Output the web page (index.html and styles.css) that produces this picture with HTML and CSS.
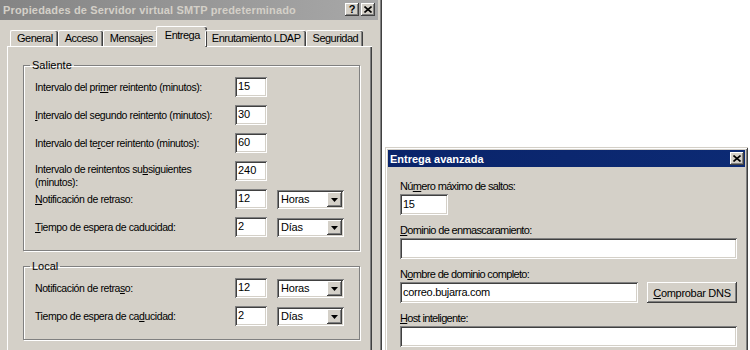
FILE: index.html
```html
<!DOCTYPE html>
<html lang="es">
<head>
<meta charset="utf-8">
<title>Propiedades de Servidor virtual SMTP predeterminado</title>
<link rel="stylesheet" href="styles.css">
</head>
<body>
<div class="screen">
  <div class="dlg-main">
    <div class="titlebar inactive">
      <span class="title">Propiedades de Servidor virtual SMTP predeterminado</span>
      <span class="tbtns">
        <span class="tbtn help">?</span>
        <span class="tbtn close"><svg width="8" height="7" viewBox="0 0 8 7"><path d="M0.5 0.5 L7.5 6.5 M7.5 0.5 L0.5 6.5" stroke="#000" stroke-width="1.6" fill="none"/></svg></span>
      </span>
    </div>
    <div class="tabs">
      <div class="tab">General</div>
      <div class="tab">Acceso</div>
      <div class="tab">Mensajes</div>
      <div class="tab active">Entrega</div>
      <div class="tab">Enrutamiento LDAP</div>
      <div class="tab">Seguridad</div>
    </div>
    <div class="panel">
      <fieldset class="group">
        <legend>Saliente</legend>
        <div class="row"><span class="lbl">Intervalo del pri<u>m</u>er reintento (minutos):</span><span class="edit num">15</span></div>
        <div class="row"><span class="lbl"><u>I</u>ntervalo del segundo reintento (minutos):</span><span class="edit num">30</span></div>
        <div class="row"><span class="lbl">Intervalo del te<u>r</u>cer reintento (minutos):</span><span class="edit num">60</span></div>
        <div class="row"><span class="lbl two">Intervalo de reintentos su<u>b</u>siguientes<br>(minutos):</span><span class="edit num">240</span></div>
        <div class="row"><span class="lbl"><u>N</u>otificación de retraso:</span><span class="edit num">12</span><span class="combo"><span class="combo-text">Horas</span><span class="drop"><svg width="7" height="4" viewBox="0 0 7 4"><path d="M0 0 H7 L3.5 4 Z" fill="#000"/></svg></span></span></div>
        <div class="row"><span class="lbl"><u>T</u>iempo de espera de caducidad:</span><span class="edit num">2</span><span class="combo"><span class="combo-text">Días</span><span class="drop"><svg width="7" height="4" viewBox="0 0 7 4"><path d="M0 0 H7 L3.5 4 Z" fill="#000"/></svg></span></span></div>
      </fieldset>
      <fieldset class="group local">
        <legend>Local</legend>
        <div class="row"><span class="lbl">Notificación de retra<u>s</u>o:</span><span class="edit num">12</span><span class="combo"><span class="combo-text">Horas</span><span class="drop"><svg width="7" height="4" viewBox="0 0 7 4"><path d="M0 0 H7 L3.5 4 Z" fill="#000"/></svg></span></span></div>
        <div class="row"><span class="lbl">Tiempo de espera de ca<u>d</u>ucidad:</span><span class="edit num">2</span><span class="combo"><span class="combo-text">Días</span><span class="drop"><svg width="7" height="4" viewBox="0 0 7 4"><path d="M0 0 H7 L3.5 4 Z" fill="#000"/></svg></span></span></div>
      </fieldset>
    </div>
  </div>
  <div class="side">
    <div class="dlg-adv">
      <div class="titlebar active-bar">
        <span class="title">Entrega avanzada</span>
        <span class="tbtns">
          <span class="tbtn close"><svg width="8" height="7" viewBox="0 0 8 7"><path d="M0.5 0.5 L7.5 6.5 M7.5 0.5 L0.5 6.5" stroke="#000" stroke-width="1.6" fill="none"/></svg></span>
        </span>
      </div>
      <div class="adv-body">
        <div class="field">
          <span class="flbl">Nú<u>m</u>ero máximo de saltos:</span>
          <span class="edit hops">15</span>
        </div>
        <div class="field">
          <span class="flbl"><u>D</u>ominio de enmascaramiento:</span>
          <span class="edit wide"></span>
        </div>
        <div class="field">
          <span class="flbl">N<u>o</u>mbre de dominio completo:</span>
          <div class="inline">
            <span class="edit fqdn">correo.bujarra.com</span>
            <span class="button"><u>C</u>omprobar DNS</span>
          </div>
        </div>
        <div class="field">
          <span class="flbl"><u>H</u>ost inteligente:</span>
          <span class="edit wide"></span>
        </div>
      </div>
    </div>
  </div>
</div>
</body>
</html>
```
FILE: styles.css
```css
* { box-sizing: border-box; }
html, body { margin: 0; padding: 0; }
body {
  background: #fff;
  font-family: "Liberation Sans", Arial, sans-serif;
  font-size: 11px;
  color: #000;
}
u { text-decoration: underline; text-underline-offset: 1px; }

.screen {
  display: flex;
  width: 750px;
  height: 350px;
  overflow: hidden;
  background: #fff;
}

/* ---------- main dialog ---------- */
.dlg-main {
  flex: 0 0 382px;
  height: 360px;
  background: #d4d0c8;
  box-shadow: inset -1px 0 #404040, inset -2px 0 #808080;
  display: flex;
  flex-direction: column;
}

.titlebar {
  display: flex;
  align-items: center;
  justify-content: space-between;
  font-weight: bold;
}
.titlebar.inactive {
  height: 20px;
  margin-right: 4px;
  padding-left: 3px;
  background: linear-gradient(to right, #848484, #a8a8a8);
  color: #d4d0c8;
}
.titlebar.inactive .title { letter-spacing: 0.15px; }
.title { white-space: nowrap; }
.tbtns { display: flex; gap: 2px; padding-right: 3px; }
.tbtn {
  width: 14px;
  height: 13px;
  background: #d4d0c8;
  box-shadow: inset -1px -1px #404040, inset 1px 1px #fff, inset -2px -2px #808080;
  display: flex;
  align-items: center;
  justify-content: center;
  color: #000;
  font-size: 11px;
  font-weight: bold;
  line-height: 13px;
}

.tabs {
  display: flex;
  align-items: flex-end;
  height: 27px;
  padding-left: 10px;
  position: relative;
  z-index: 1;
}
.tab {
  height: 16px;
  padding: 0 5px 0 6px;
  line-height: 15px;
  letter-spacing: -0.5px;
  border-top: 1px solid #fff;
  border-left: 1px solid #fff;
  border-radius: 2px 2px 0 0;
  box-shadow: inset -1px 0 #404040, inset -2px 0 #808080;
  white-space: nowrap;
}
.tab.active {
  height: 21px;
  margin: 0 -2px -1px -2px;
  padding: 0 7px 0 8px;
  line-height: 17px;
  background: #d4d0c8;
}

.panel {
  margin-left: 7px;
  width: 365px;
  height: 320px;
  border-top: 1px solid #fff;
  border-left: 1px solid #fff;
  box-shadow: inset -1px 0 #404040, inset -2px 0 #808080;
  padding: 12px 12px 0 15px;
}

.group {
  margin: 0;
  padding: 5px 10px 13px 11px;
  border: 1px solid #808080;
  box-shadow: inset 1px 1px #fff, 1px 1px #fff;
}
.group legend {
  padding: 0 2px;
  margin-left: -5px;
  line-height: 13px;
}
.group.local { margin-top: 9px; }

.row {
  display: flex;
  align-items: center;
  height: 20px;
  margin-bottom: 8px;
}
.row:last-child { margin-bottom: 0; }
.lbl {
  width: 200px;
  flex: 0 0 200px;
  font-size: 10.5px;
  line-height: 13px;
  letter-spacing: -0.4px;
  white-space: nowrap;
}
.lbl.two { align-self: flex-start; padding-top: 2px; }

.edit {
  display: block;
  height: 20px;
  background: #fff;
  box-shadow: inset 1px 1px #808080, inset -1px -1px #fff, inset 2px 2px #404040, inset -2px -2px #d4d0c8;
  padding: 2px 3px 0 3px;
  line-height: 15px;
  white-space: nowrap;
  overflow: hidden;
}
.edit.num { width: 32px; flex: 0 0 32px; }

.combo {
  display: flex;
  align-items: center;
  justify-content: space-between;
  width: 67px;
  height: 19px;
  margin-left: 10px;
  margin-top: 1px;
  background: #fff;
  box-shadow: inset 1px 1px #808080, inset -1px -1px #fff, inset 2px 2px #404040, inset -2px -2px #d4d0c8;
  padding: 2px 2px 2px 4px;
}
.combo-text { letter-spacing: -0.2px; line-height: 15px; }
.drop {
  width: 15px;
  height: 15px;
  background: #d4d0c8;
  box-shadow: inset -1px -1px #404040, inset 1px 1px #fff, inset -2px -2px #808080;
  display: flex;
  align-items: center;
  justify-content: center;
}

/* ---------- advanced dialog ---------- */
.side {
  flex: 1 1 auto;
  padding: 147px 0 0 3px;
}
.dlg-adv {
  width: 363px;
  height: 215px;
  background: #d4d0c8;
  padding: 3px;
  box-shadow: inset 1px 1px #d4d0c8, inset -1px -1px #404040, inset 2px 2px #fff, inset -2px -2px #808080;
}
.titlebar.active-bar {
  height: 17px;
  padding-left: 2px;
  background: linear-gradient(to right, #0a246a, #0c2a74);
  color: #fff;
}
.titlebar.active-bar .tbtns { padding-right: 1px; }

.adv-body {
  padding: 13px 8px 0 12px;
  display: flex;
  flex-direction: column;
  gap: 9px;
}
.field { display: flex; flex-direction: column; gap: 1px; }
.flbl { line-height: 13px; letter-spacing: -0.65px; white-space: nowrap; }
.field .edit { height: 21px; padding-top: 3px; letter-spacing: -0.3px; }
.edit.hops { width: 48px; }
.edit.wide { width: 337px; }
.inline { display: flex; gap: 9px; }
.edit.fqdn { width: 238px; }
.button {
  width: 90px;
  height: 21px;
  background: #d4d0c8;
  box-shadow: inset -1px -1px #404040, inset 1px 1px #fff, inset -2px -2px #808080;
  display: flex;
  align-items: center;
  justify-content: center;
  letter-spacing: -0.3px;
}
```
